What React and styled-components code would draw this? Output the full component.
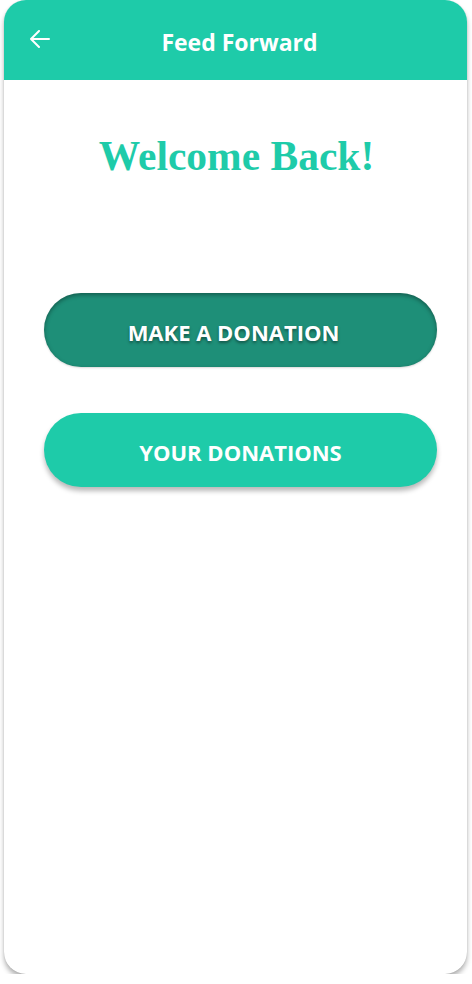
import React from "react";
import styled, { createGlobalStyle } from "styled-components";

const GlobalStyle = createGlobalStyle`
  html, body {
    margin: 0;
    padding: 0;
    background: #ffffff;
  }
  * {
    box-sizing: border-box;
  }
`;

const Screen = styled.div`
  width: 463px;
  height: 974px;
  margin: 0 0 0 4px;
  background: #ffffff;
  border-radius: 22px;
  box-shadow: 0 4px 5px rgba(0, 0, 0, 0.3), 0 0 1px rgba(0, 0, 0, 0.2);
  overflow: hidden;
  display: flex;
  flex-direction: column;
`;

const Header = styled.header`
  height: 80px;
  background: #1ecba9;
  display: grid;
  grid-template-columns: 60px 1fr 52px;
  align-items: center;
  padding-top: 4px;
`;

const BackButton = styled.button`
  background: none;
  border: none;
  padding: 0 0 0 25px;
  display: flex;
  align-items: center;
  height: 24px;
  margin-top: -6px;
  cursor: pointer;
`;

const Title = styled.h1`
  margin: 0;
  text-align: center;
  color: #ffffff;
  font-family: "Open Sans", "Noto Sans", sans-serif;
  font-weight: 700;
  font-size: 23px;
  line-height: 1;
`;

const Content = styled.main`
  display: flex;
  flex-direction: column;
  align-items: center;
  padding: 52px 0 0;
`;

const Heading = styled.h2`
  margin: 0 0 112px 2px;
  color: #1ecba9;
  font-family: "Liberation Serif", "DejaVu Serif", serif;
  font-weight: 700;
  font-size: 41.5px;
  line-height: 49px;
`;

const Actions = styled.div`
  align-self: flex-start;
  margin-left: 40px;
  display: flex;
  flex-direction: column;
  gap: 46px;
  width: 393px;
`;

const ActionButton = styled.button`
  height: 74px;
  width: 100%;
  border: none;
  border-radius: 37px;
  background: ${(p) => (p.$active ? "#1e8f78" : "#1ecba9")};
  box-shadow: ${(p) =>
    p.$active
      ? "inset 0 2px 4px rgba(0, 0, 0, 0.35), 0 1px 2px rgba(0, 0, 0, 0.15)"
      : "0 4px 5px rgba(0, 0, 0, 0.28)"};
  color: #ffffff;
  font-family: "Open Sans", "Noto Sans", sans-serif;
  font-weight: 700;
  font-size: 22px;
  padding: 4px ${(p) => (p.$active ? "14px" : "0")} 0 0;
  text-shadow: ${(p) => (p.$active ? "0 2px 3px rgba(0, 0, 0, 0.4)" : "none")};
  cursor: pointer;
`;

function BackArrow() {
  return (
    <svg width="21" height="18" viewBox="0 0 21 18" fill="none">
      <path
        d="M20 9H2M10 1L2 9l8 8"
        stroke="#ffffff"
        strokeWidth="2"
        strokeLinecap="round"
        strokeLinejoin="round"
      />
    </svg>
  );
}

export default function App() {
  return (
    <>
      <GlobalStyle />
      <Screen>
        <Header>
          <BackButton aria-label="Back">
            <BackArrow />
          </BackButton>
          <Title>Feed Forward</Title>
          <span />
        </Header>
        <Content>
          <Heading>Welcome Back!</Heading>
          <Actions>
            <ActionButton $active>MAKE A DONATION</ActionButton>
            <ActionButton>YOUR DONATIONS</ActionButton>
          </Actions>
        </Content>
      </Screen>
    </>
  );
}
